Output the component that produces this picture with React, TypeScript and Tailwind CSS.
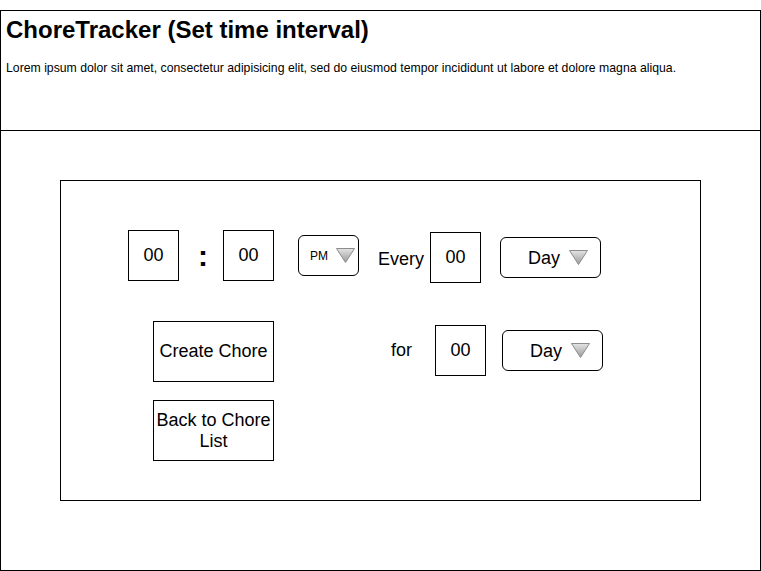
const Arrow = () => (
  <svg width="19" height="15" viewBox="0 0 19 15">
    <defs>
      <linearGradient id="tri" x1="0" y1="0" x2="0" y2="1">
        <stop offset="0" stopColor="#e4e4e4" />
        <stop offset="1" stopColor="#9a9a9a" />
      </linearGradient>
    </defs>
    <polygon points="0.5,0.5 18.5,0.5 9.5,14.5" fill="url(#tri)" stroke="#8c8c8c" strokeWidth="1" />
  </svg>
);

const NumBox = ({ className = "" }: { className?: string }) => (
  <div
    className={`w-[51px] h-[51px] border border-black flex items-center justify-center text-[18px] ${className}`}
  >
    00
  </div>
);

const Dropdown = ({ label, className = "" }: { label: string; className?: string }) => (
  <div className={`w-[101px] h-[41px] border border-black rounded-[6px] flex items-center pl-[27px] gap-[9px] ${className}`}>
    <span className="text-[18px] leading-none">{label}</span>
    <Arrow />
  </div>
);

export default function App() {
  return (
    <div
      className="w-[761px] h-[571px] bg-white text-black"
      style={{ fontFamily: '"Liberation Sans", Arial, sans-serif' }}
    >
      <div className="mt-[10px] w-[761px] h-[561px] border border-black">
        {/* header */}
        <div className="h-[120px] border-b border-black px-[5px] pt-[5px]">
          <h1 className="text-[24px] font-bold leading-[28px]">ChoreTracker (Set time interval)</h1>
          <p className="mt-[17px] text-[12.25px] leading-[14px]">
            Lorem ipsum dolor sit amet, consectetur adipisicing elit, sed do eiusmod tempor incididunt ut labore et dolore magna aliqua.
          </p>
        </div>

        {/* form panel */}
        <div className="ml-[59px] mt-[49px] w-[641px] h-[321px] border border-black pt-[49px] pl-[67px]">
          <div className="flex items-start h-[52px]">
            <NumBox />
            <div className="w-[44px] h-[51px] flex items-center justify-center pl-[4px] text-[30px] font-bold leading-none">:</div>
            <NumBox />
            <div className="ml-[24px] mt-[5px] w-[61px] h-[41px] border border-black rounded-[6px] flex items-center pl-[11px] gap-[8px]">
              <span className="text-[12px] leading-none">PM</span>
              <Arrow />
            </div>
            <span className="ml-[19px] mt-[19px] text-[18px] leading-[21px]">Every</span>
            <NumBox className="ml-[6px] mt-[2px]" />
            <Dropdown label="Day" className="ml-[19px] mt-[7px]" />
          </div>

          <div className="mt-[39px] pl-[25px] flex items-start">
            <div className="flex flex-col gap-[18px]">
              <button className="w-[121px] h-[61px] border border-black text-[18px] leading-[21px]">Create Chore</button>
              <button className="w-[121px] h-[61px] border border-black text-[18px] leading-[21px]">
                Back to Chore
                <br />
                List
              </button>
            </div>
            <span className="ml-[117px] mt-[19px] text-[18px] leading-[21px]">for</span>
            <NumBox className="ml-[23px] mt-[4px]" />
            <Dropdown label="Day" className="ml-[16px] mt-[9px]" />
          </div>
        </div>
      </div>
    </div>
  );
}
